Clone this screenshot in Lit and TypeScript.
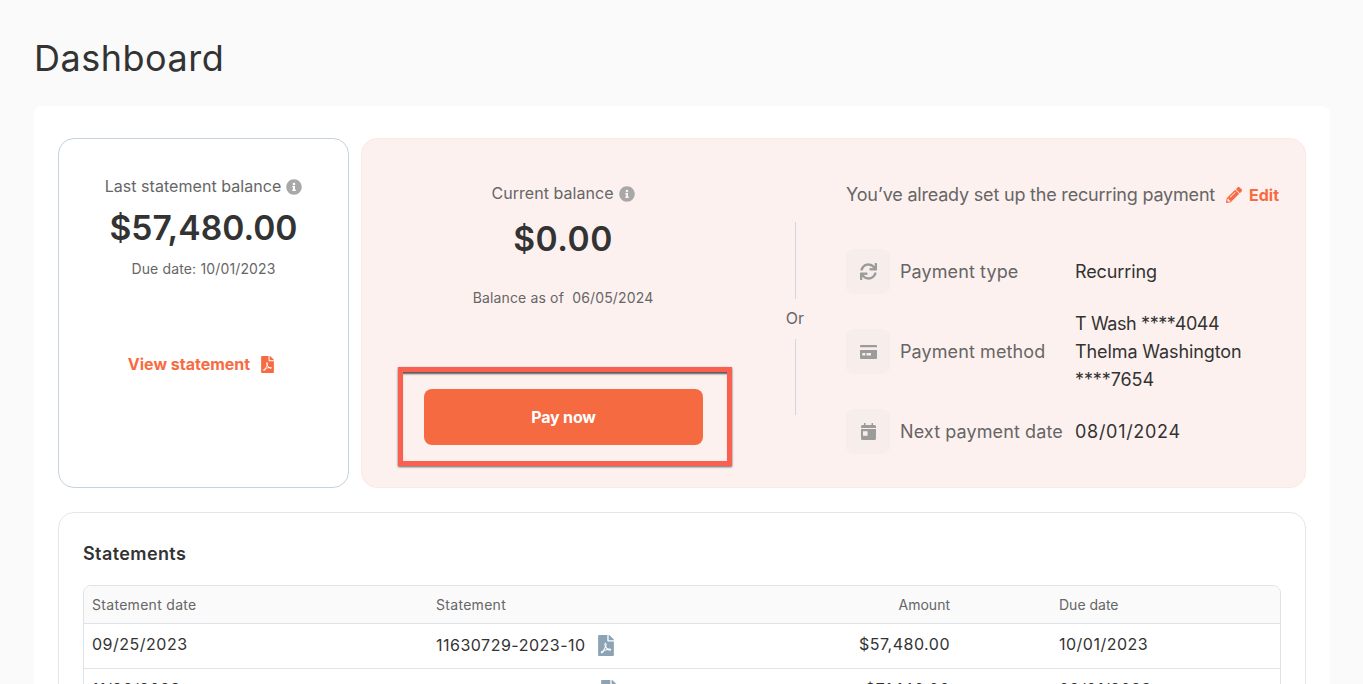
import { LitElement, html, css, svg } from 'lit';
import { customElement } from 'lit/decorators.js';

const infoPath = svg`<path d="M256 8C119.043 8 8 119.083 8 256c0 136.997 111.043 248 248 248s248-111.003 248-248C504 119.083 392.957 8 256 8zm0 110c23.196 0 42 18.804 42 42s-18.804 42-42 42-42-18.804-42-42 18.804-42 42-42zm56 254c0 6.627-5.373 12-12 12h-88c-6.627 0-12-5.373-12-12v-24c0-6.627 5.373-12 12-12h12v-64h-12c-6.627 0-12-5.373-12-12v-24c0-6.627 5.373-12 12-12h64c6.627 0 12 5.373 12 12v100h12c6.627 0 12 5.373 12 12v24z"/>`;
const pdfPath = svg`<path d="M181.9 256.1c-5-16-4.9-46.9-2-46.9 8.4 0 7.6 36.9 2 46.9zm-1.7 47.2c-7.7 20.2-17.3 43.3-28.4 62.7 18.3-7 39-17.2 62.9-21.9-12.7-9.6-24.9-23.4-34.5-40.8zM86.1 428.1c0 .8 13.2-5.4 34.9-40.2-6.7 6.3-29.1 24.5-34.9 40.2zM248 160h136v328c0 13.3-10.7 24-24 24H24c-13.3 0-24-10.7-24-24V24C0 10.7 10.7 0 24 0h200v136c0 13.2 10.8 24 24 24zm-8 171.8c-20-12.2-33.3-29-42.7-53.8 4.5-18.5 11.6-46.6 6.2-64.2-4.7-29.4-42.4-26.5-47.8-6.8-5 18.3-.4 44.1 8.1 77-11.6 27.6-28.7 64.6-40.8 85.8-.1 0-.1.1-.2.1-27.1 13.9-73.6 44.5-54.5 68 5.6 6.9 16 10 21.5 10 17.9 0 35.7-18 61.1-61.8 25.8-8.5 54.1-19.1 79-23.2 21.7 11.8 47.1 19.5 64 19.5 29.2 0 31.2-32 19.7-43.4-13.9-13.6-54.3-9.7-73.6-7.2zM377 105L279 7c-4.5-4.5-10.6-7-17-7h-6v128h128v-6.1c0-6.3-2.5-12.4-7-16.9zm-74.1 255.3c4.1-2.7-2.5-11.9-42.8-9 37.1 15.8 42.8 9 42.8 9z"/>`;

const infoIcon = html`<svg class="info" viewBox="0 0 512 512">${infoPath}</svg>`;
const pdfIcon = (cls: string) => html`<svg class=${cls} viewBox="0 0 384 512">${pdfPath}</svg>`;

const syncIcon = html`<svg class="sync" viewBox="0 0 512 512"><path d="M440.65 12.57l4 82.77A247.16 247.16 0 0 0 255.83 8C134.73 8 33.91 94.92 12.29 209.82A12 12 0 0 0 24.09 224h49.05a12 12 0 0 0 11.67-9.26 175.91 175.91 0 0 1 317-56.94l-101.46-4.86a12 12 0 0 0-12.57 12v47.41a12 12 0 0 0 12 12H500a12 12 0 0 0 12-12V12a12 12 0 0 0-12-12h-47.37a12 12 0 0 0-11.98 12.57zM255.83 432a175.61 175.61 0 0 1-146-77.8l101.8 4.87a12 12 0 0 0 12.57-12v-47.4a12 12 0 0 0-12-12H12a12 12 0 0 0-12 12V500a12 12 0 0 0 12 12h47.35a12 12 0 0 0 12-12.6l-4.15-82.57A247.17 247.17 0 0 0 255.83 504c121.11 0 221.93-86.92 243.55-201.82a12 12 0 0 0-11.8-14.18h-49.05a12 12 0 0 0-11.67 9.26A175.86 175.86 0 0 1 255.83 432z"/></svg>`;
const cardIcon = html`<svg class="card" viewBox="0 0 17 14"><path d="M0 1a1 1 0 0 1 1-1h15a1 1 0 0 1 1 1v1.300H0zM0 5h17v8a1 1 0 0 1-1 1H1a1 1 0 0 1-1-1zm2.300 3v2.500h3V8zm4.200 0v2.500h4.500V8z" fill-rule="evenodd"/></svg>`;
const calendarIcon = html`<svg class="calendar" viewBox="0 0 15 17"><path d="M3 0h1.500v2h6V0H12v2h1.500A1.500 1.500 0 0 1 15 3.500V5H0V3.500A1.500 1.500 0 0 1 1.500 2H3zM0 6h15v9.500a1.500 1.500 0 0 1-1.500 1.500h-12A1.500 1.500 0 0 1 0 15.500zm2 2.200v4.600h4.600V8.200z" fill-rule="evenodd"/></svg>`;
const pencilIcon = html`<svg class="pencil" viewBox="0 0 512 512"><path d="M497.9 142.1l-46.1 46.1c-4.7 4.7-12.3 4.7-17 0l-111-111c-4.7-4.7-4.7-12.3 0-17l46.1-46.1c18.7-18.7 49.1-18.7 67.9 0l60.1 60.1c18.8 18.7 18.8 49.1 0 67.9zM284.2 99.8L21.6 362.4.4 483.9c-2.9 16.4 11.4 30.6 27.8 27.8l121.5-21.3 262.6-262.6c4.7-4.7 4.7-12.3 0-17l-111-111c-4.8-4.7-12.4-4.7-17.1 0zM124.1 339.9c-5.5-5.5-5.5-14.3 0-19.8l154-154c5.5-5.5 14.3-5.5 19.8 0s5.5 14.3 0 19.8l-154 154c-5.5 5.500-14.3 5.500-19.8 0zM88 424h48v36.300l-64.500 11.300-31.100-31.100L51.700 376H88v48z"/></svg>`;

const statements = [
  { date: '09/25/2023', id: '11630729-2023-10', amount: '$57,480.00', due: '10/01/2023' },
  { date: '11/26/2023', id: '11630729-2023-09', amount: '$71,140.00', due: '09/01/2023' },
];

@customElement('app-root')
export class AppRoot extends LitElement {
  static styles = css`
    :host {
      display: block;
      height: 684px;
      overflow: hidden;
      box-sizing: border-box;
      padding: 0 33px 0 34px;
      background: #fafafa;
      color: #333;
      font-family: Inter, 'Noto Sans', sans-serif;
    }
    h1 {
      margin: 0;
      padding-top: 36px;
      height: 106px;
      box-sizing: border-box;
      font-size: 36px;
      line-height: 44px;
      font-weight: 400;
      letter-spacing: 0.5px;
    }
    .sheet {
      background: #fff;
      border-radius: 8px;
      padding: 32px 24px;
    }
    .top {
      display: flex;
      gap: 12px;
      height: 350px;
    }
    .last {
      box-sizing: border-box;
      width: 291px;
      border: 1px solid #c5d3dd;
      border-radius: 16px;
      display: flex;
      flex-direction: column;
      align-items: center;
      padding-top: 36px;
    }
    .caption {
      display: flex;
      align-items: center;
      gap: 5px;
      font-size: 16px;
      line-height: 22px;
      color: #666;
      letter-spacing: 0.05px;
    }
    .info {
      width: 16px;
      height: 16px;
      fill: #a8a8a8;
      margin-top: 2px;
    }
    .amount {
      font-size: 33.6px;
      line-height: 40px;
      font-weight: 600;
      margin-top: 11px;
    }
    .note {
      font-size: 14px;
      line-height: 20px;
      color: #666;
      letter-spacing: 0.15px;
    }
    .last .note {
      margin-top: 11px;
    }
    .view {
      display: flex;
      align-items: center;
      gap: 11px;
      margin-top: 73px;
      margin-right: 5px;
      font-size: 16px;
      line-height: 24px;
      font-weight: 700;
      color: #f86b42;
    }
    .pdf-orange {
      width: 13px;
      height: 17px;
      fill: #f86b42;
    }
    .panel {
      flex: 1;
      display: flex;
      box-sizing: border-box;
      background: #fdf1ef;
      border: 1px solid #fbe9e6;
      border-radius: 16px;
      padding: 0 26px 0 23px;
    }
    .pay {
      width: 356px;
      display: flex;
      flex-direction: column;
      align-items: center;
      padding-top: 43px;
    }
    .amount.balance {
      margin-top: 15px;
      letter-spacing: 0.5px;
    }
    .pay .note {
      margin-top: 29px;
    }
    .highlight {
      box-sizing: border-box;
      width: 334px;
      height: 99px;
      margin-top: 59px;
      margin-left: 4px;
      display: flex;
      align-items: center;
      justify-content: center;
      padding-top: 1px;
      padding-right: 3px;
      border: 5px solid #f9604f;
      box-shadow: 0 1px 2px rgba(0, 0, 0, 0.6), inset 0 3px 2px -1px rgba(60, 60, 60, 0.85);
    }
    .pay-btn {
      width: 279px;
      height: 56px;
      border: none;
      border-radius: 8px;
      background: #f56a41;
      color: #fff;
      font: 700 16px Inter, 'Noto Sans', sans-serif;
      letter-spacing: -0.2px;
    }
    .split {
      width: 102px;
      margin-left: 3px;
      flex-shrink: 0;
      display: flex;
      flex-direction: column;
      align-items: center;
      box-sizing: border-box;
      padding: 83px 0 72px 0;
      font-size: 16px;
      color: #666;
    }
    .split i {
      flex: 1;
      width: 1px;
      background: #ccd9e2;
    }
    .split span {
      line-height: 18px;
      padding-bottom: 2px;
      margin: 10px 0;
    }
    .setup {
      flex: 1;
      padding-top: 42px;
    }
    .setup-head {
      display: flex;
      align-items: center;
      font-size: 18px;
      line-height: 28px;
      color: #666;
      white-space: nowrap;
      letter-spacing: -0.2px;
    }
    .edit {
      display: flex;
      align-items: center;
      gap: 7px;
      margin-left: auto;
      color: #f86b42;
      font-size: 16px;
      font-weight: 700;
      letter-spacing: 0;
    }
    .pencil {
      width: 16px;
      height: 16px;
      fill: #f86b42;
    }
    .rows {
      display: grid;
      grid-template-columns: 44px 165px 1fr;
      column-gap: 10px;
      row-gap: 15.5px;
      align-items: center;
      margin-top: 40px;
      font-size: 18px;
      line-height: 28px;
    }
    .tile {
      width: 44px;
      height: 45px;
      border-radius: 8px;
      background: #f7eeeb;
      display: flex;
      align-items: center;
      justify-content: center;
    }
    .tile svg {
      fill: #9b9b9b;
    }
    .sync {
      width: 17px;
      height: 17px;
    }
    .card {
      width: 17px;
      height: 14px;
    }
    .calendar {
      width: 15px;
      height: 17px;
    }
    .label {
      color: #666;
      letter-spacing: 0.1px;
    }
    .value {
      color: #333;
      letter-spacing: -0.1px;
    }
    .masked {
      letter-spacing: -0.4px;
    }
    .digits {
      letter-spacing: 0.7px;
    }
    .statements {
      margin-top: 24px;
      border: 1px solid #e4e6e8;
      border-radius: 16px;
      padding: 24px;
    }
    h2 {
      margin: 0;
      padding-top: 1px;
      font-size: 18px;
      line-height: 32px;
      font-weight: 600;
      letter-spacing: 0.4px;
    }
    .table-wrap {
      margin-top: 15px;
      border: 1px solid #dde3e8;
      border-radius: 8px;
      overflow: hidden;
    }
    table {
      width: 100%;
      border-collapse: collapse;
      table-layout: fixed;
    }
    th {
      height: 37px;
      padding: 0 8px;
      background: #fafafa;
      border-bottom: 1px solid #dde3e8;
      font-size: 14px;
      font-weight: 400;
      color: #666;
      text-align: left;
      letter-spacing: 0.3px;
    }
    th.num,
    th.due {
      letter-spacing: 0;
    }
    td {
      height: 45px;
      padding: 0 8px 5px;
      box-sizing: border-box;
      border-bottom: 1px solid #e1e5e8;
      font-size: 16px;
      color: #333;
      letter-spacing: 0.5px;
    }
    .num {
      text-align: right;
    }
    .due {
      padding-left: 101px;
    }
    .doc {
      display: flex;
      align-items: center;
      gap: 13px;
      margin-bottom: -3px;
    }
    .pdf-grey {
      width: 16px;
      height: 21px;
      fill: #8ba3b5;
      margin-left: -1px;
    }
  `;

  render() {
    return html`
      <h1>Dashboard</h1>
      <div class="sheet">
        <div class="top">
          <section class="last">
            <div class="caption">Last statement balance ${infoIcon}</div>
            <div class="amount">$57,480.00</div>
            <div class="note">Due date: 10/01/2023</div>
            <div class="view">View statement ${pdfIcon('pdf-orange')}</div>
          </section>
          <section class="panel">
            <div class="pay">
              <div class="caption">Current balance ${infoIcon}</div>
              <div class="amount balance">$0.00</div>
              <div class="note">Balance as of&nbsp; 06/05/2024</div>
              <div class="highlight"><button class="pay-btn">Pay now</button></div>
            </div>
            <div class="split"><i></i><span>Or</span><i></i></div>
            <div class="setup">
              <div class="setup-head">
                You’ve already set up the recurring payment
                <span class="edit">${pencilIcon} Edit</span>
              </div>
              <div class="rows">
                <div class="tile">${syncIcon}</div>
                <div class="label">Payment type</div>
                <div class="value">Recurring</div>
                <div class="tile">${cardIcon}</div>
                <div class="label">Payment method</div>
                <div class="value"><span class="masked">T Wash ****4044</span><br />Thelma Washington<br />****7654</div>
                <div class="tile">${calendarIcon}</div>
                <div class="label">Next payment date</div>
                <div class="value digits">08/01/2024</div>
              </div>
            </div>
          </section>
        </div>
        <section class="statements">
          <h2>Statements</h2>
          <div class="table-wrap">
            <table>
              <colgroup>
                <col style="width:344px" />
                <col style="width:314px" />
                <col style="width:216px" />
                <col />
              </colgroup>
              <thead>
                <tr>
                  <th>Statement date</th>
                  <th>Statement</th>
                  <th class="num">Amount</th>
                  <th class="due">Due date</th>
                </tr>
              </thead>
              <tbody>
                ${statements.map(
                  (s) => html`
                    <tr>
                      <td>${s.date}</td>
                      <td><div class="doc">${s.id} ${pdfIcon('pdf-grey')}</div></td>
                      <td class="num">${s.amount}</td>
                      <td class="due">${s.due}</td>
                    </tr>
                  `,
                )}
              </tbody>
            </table>
          </div>
        </section>
      </div>
    `;
  }
}
